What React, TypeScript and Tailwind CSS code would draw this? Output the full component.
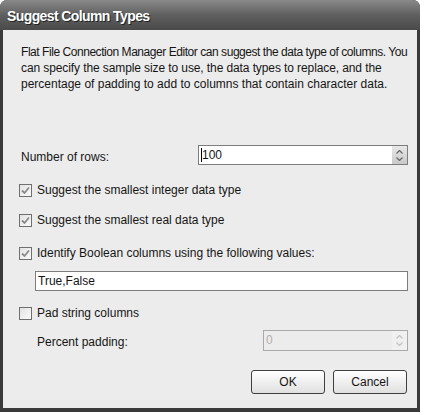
const font = { fontFamily: '"Liberation Sans", Arial, sans-serif' };

function Check({ checked }: { checked?: boolean }) {
  return (
    <div className="w-[13px] h-[13px] border border-[#6f6f6f] bg-gradient-to-br from-[#e2e2e2] to-[#fbfbfb] flex items-center justify-center shrink-0">
      {checked && (
        <svg width="9" height="9" viewBox="0 0 9 9">
          <path d="M1 4.5 L3.5 7 L8 1.5" fill="none" stroke="#8a8a8a" strokeWidth="1.8" />
        </svg>
      )}
    </div>
  );
}

function Spinner({ disabled }: { disabled?: boolean }) {
  const c = disabled ? "#c4c4c4" : "#6a6a6a";
  return (
    <div
      className={`w-[15px] h-full flex flex-col items-center justify-center gap-[3px] ${
        disabled ? "bg-[#f0f0f0]" : "bg-gradient-to-b from-[#e8e8e8] to-[#c9c9c9]"
      }`}
    >
      <svg width="7" height="4" viewBox="0 0 7 4">
        <path d="M0.5 3.5 L3.5 0.5 L6.5 3.5" fill="none" stroke={c} strokeWidth="1.3" />
      </svg>
      <svg width="7" height="4" viewBox="0 0 7 4">
        <path d="M0.5 0.5 L3.5 3.5 L6.5 0.5" fill="none" stroke={c} strokeWidth="1.3" />
      </svg>
    </div>
  );
}

function CheckRow({ label, checked, className }: { label: string; checked?: boolean; className: string }) {
  return (
    <div className={`h-[20px] flex items-center gap-[5px] ${className}`}>
      <Check checked={checked} />
      <span>{label}</span>
    </div>
  );
}

export default function App() {
  return (
    <div className="w-[427px] h-[415px] bg-white text-[12px] text-[#151515]" style={font}>
      <div className="w-[420px] h-[412px] flex flex-col rounded-t-[7px] overflow-hidden bg-[#3a3a3a]">
        <div className="h-[30px] bg-gradient-to-b from-[#8a8a8a] via-[#5f5f5f] to-[#4a4a4a] flex items-center pl-[7px] pt-[2px]">
          <span className="text-white font-bold text-[14px] tracking-[-0.6px]" style={{ textShadow: "1px 1px 0 #222" }}>
            Suggest Column Types
          </span>
        </div>
        <div className="flex-1 mx-[3px] mb-[4px] bg-[#ececec] pl-[16px] pr-[9px] pt-[14px] flex flex-col">
          <p className="leading-[16px] pl-[2px]">
            <span className="block whitespace-nowrap tracking-[-0.45px]">
              Flat File Connection Manager Editor can suggest the data type of columns. You
            </span>
            <span className="block whitespace-nowrap tracking-[-0.1px]">
              can specify the sample size to use, the data types to replace, and the
            </span>
            <span className="block whitespace-nowrap">
              percentage of padding to add to columns that contain character data.
            </span>
          </p>

          <div className="mt-[53px] h-[20px] flex items-center justify-between">
            <span className="pl-[2px] pt-[3px]">Number of rows:</span>
            <div className="w-[210px] h-[20px] border border-[#7d7d7d] bg-white flex items-stretch justify-between">
              <span className="pl-[2px] leading-[18px]">
                <span className="border-l border-black" />100
              </span>
              <Spinner />
            </div>
          </div>

          <CheckRow className="mt-[15px]" checked label="Suggest the smallest integer data type" />
          <CheckRow className="mt-[10px]" checked label="Suggest the smallest real data type" />
          <CheckRow className="mt-[13px]" checked label="Identify Boolean columns using the following values:" />

          <div className="mt-[8px] ml-[16px] h-[20px] border border-[#7d7d7d] bg-white pl-[2px] leading-[18px]">
            True,False
          </div>

          <CheckRow className="mt-[12px]" label="Pad string columns" />

          <div className="mt-[7px] h-[21px] flex items-center justify-between">
            <span className="pl-[18px] pt-[2px]">Percent padding:</span>
            <div className="w-[145px] h-[21px] border border-[#a9a9a9] bg-[#ececec] flex items-stretch justify-between">
              <span className="pl-[2px] leading-[19px] text-[#b0b0b0]">0</span>
              <Spinner disabled />
            </div>
          </div>

          <div className="mt-[19px] flex justify-end gap-[8px] pr-[1px]">
            <button className="w-[74px] h-[24px] rounded-[3px] border border-[#3f3f3f] bg-gradient-to-b from-white to-[#e0e0e0]">
              OK
            </button>
            <button className="w-[74px] h-[24px] rounded-[3px] border border-[#3f3f3f] bg-gradient-to-b from-white to-[#e0e0e0]">
              Cancel
            </button>
          </div>
        </div>
      </div>
    </div>
  );
}
